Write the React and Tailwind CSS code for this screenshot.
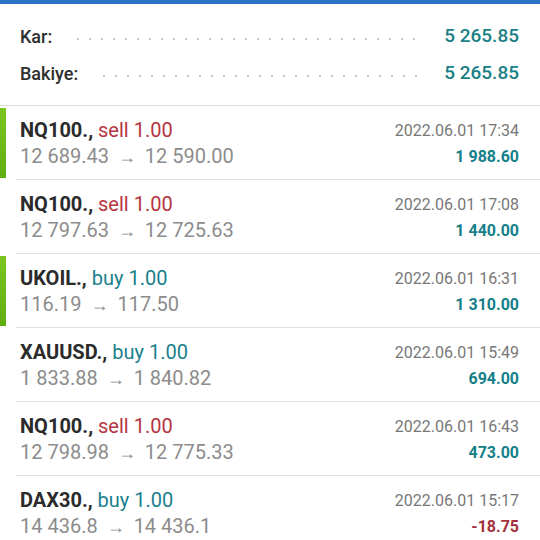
import React from 'react';

const SUMMARY = [
  { label: 'Kar:', value: '5 265.85' },
  { label: 'Bakiye:', value: '5 265.85' },
];

const DEALS = [
  { sym: 'NQ100.,', side: 'sell', vol: '1.00', from: '12 689.43', to: '12 590.00', time: '2022.06.01 17:34', profit: '1 988.60', mark: true },
  { sym: 'NQ100.,', side: 'sell', vol: '1.00', from: '12 797.63', to: '12 725.63', time: '2022.06.01 17:08', profit: '1 440.00' },
  { sym: 'UKOIL.,', side: 'buy', vol: '1.00', from: '116.19', to: '117.50', time: '2022.06.01 16:31', profit: '1 310.00', mark: true },
  { sym: 'XAUUSD.,', side: 'buy', vol: '1.00', from: '1 833.88', to: '1 840.82', time: '2022.06.01 15:49', profit: '694.00' },
  { sym: 'NQ100.,', side: 'sell', vol: '1.00', from: '12 798.98', to: '12 775.33', time: '2022.06.01 16:43', profit: '473.00' },
  { sym: 'DAX30.,', side: 'buy', vol: '1.00', from: '14 436.8', to: '14 436.1', time: '2022.06.01 15:17', profit: '-18.75' },
];

function DealRow({ deal }) {
  const negative = deal.profit.startsWith('-');
  return (
    <div className="flex h-[74px] shrink-0">
      <div className={`w-[6px] my-[2px] ${deal.mark ? 'bg-gradient-to-b from-[#7cc520] to-[#5fae10]' : ''}`} />
      <div className="flex flex-1 justify-between border-b border-[#e2e2e2] ml-[10px] pl-[4px] pr-[21px] pt-[11px]">
        <div className="flex flex-col">
          <div className="text-[20px] leading-[26px] text-[#2b2b2b]">
            <span className="font-bold">{deal.sym}</span>{' '}
            <span className={deal.side === 'sell' ? 'text-[#b4343f]' : 'text-[#19808c]'}>{deal.side} {deal.vol}</span>
          </div>
          <div className="text-[20px] leading-[26px] text-[#8c8c8c]">
            {deal.from} <span className="text-[18px] mx-[4px]">→</span> {deal.to}
          </div>
        </div>
        <div className="flex flex-col items-end pt-[1px]">
          <div className="text-[16px] leading-[26px] text-[#777]">{deal.time}</div>
          <div className={`text-[16px] leading-[26px] font-bold ${negative ? 'text-[#a3303c]' : 'text-[#157f89]'}`}>{deal.profit}</div>
        </div>
      </div>
    </div>
  );
}

export default function App() {
  return (
    <div className="w-[540px] h-[540px] overflow-hidden bg-white flex flex-col" style={{ fontFamily: 'Roboto, "Liberation Sans", sans-serif' }}>
      <div className="h-[4px] bg-[#2a72c6] shrink-0" />
      <div className="flex flex-col pt-[14px] pb-[13px] pl-[20px] pr-[21px] border-b border-[#dcdcdc] shrink-0">
        {SUMMARY.map((row) => (
          <div key={row.label} className="flex items-center h-[37px] gap-[20px]">
            <span className="text-[18px] font-medium text-[#2e2e2e]">{row.label}</span>
            <div className="flex-1 h-[4px] mt-[4px] bg-[radial-gradient(circle,#c4c4c4_1px,transparent_1.4px)] bg-[length:12px_4px]" />
            <span className="text-[19px] font-medium text-[#1a7f86]">{row.value}</span>
          </div>
        ))}
      </div>
      {DEALS.map((d, i) => (
        <DealRow key={i} deal={d} />
      ))}
    </div>
  );
}
